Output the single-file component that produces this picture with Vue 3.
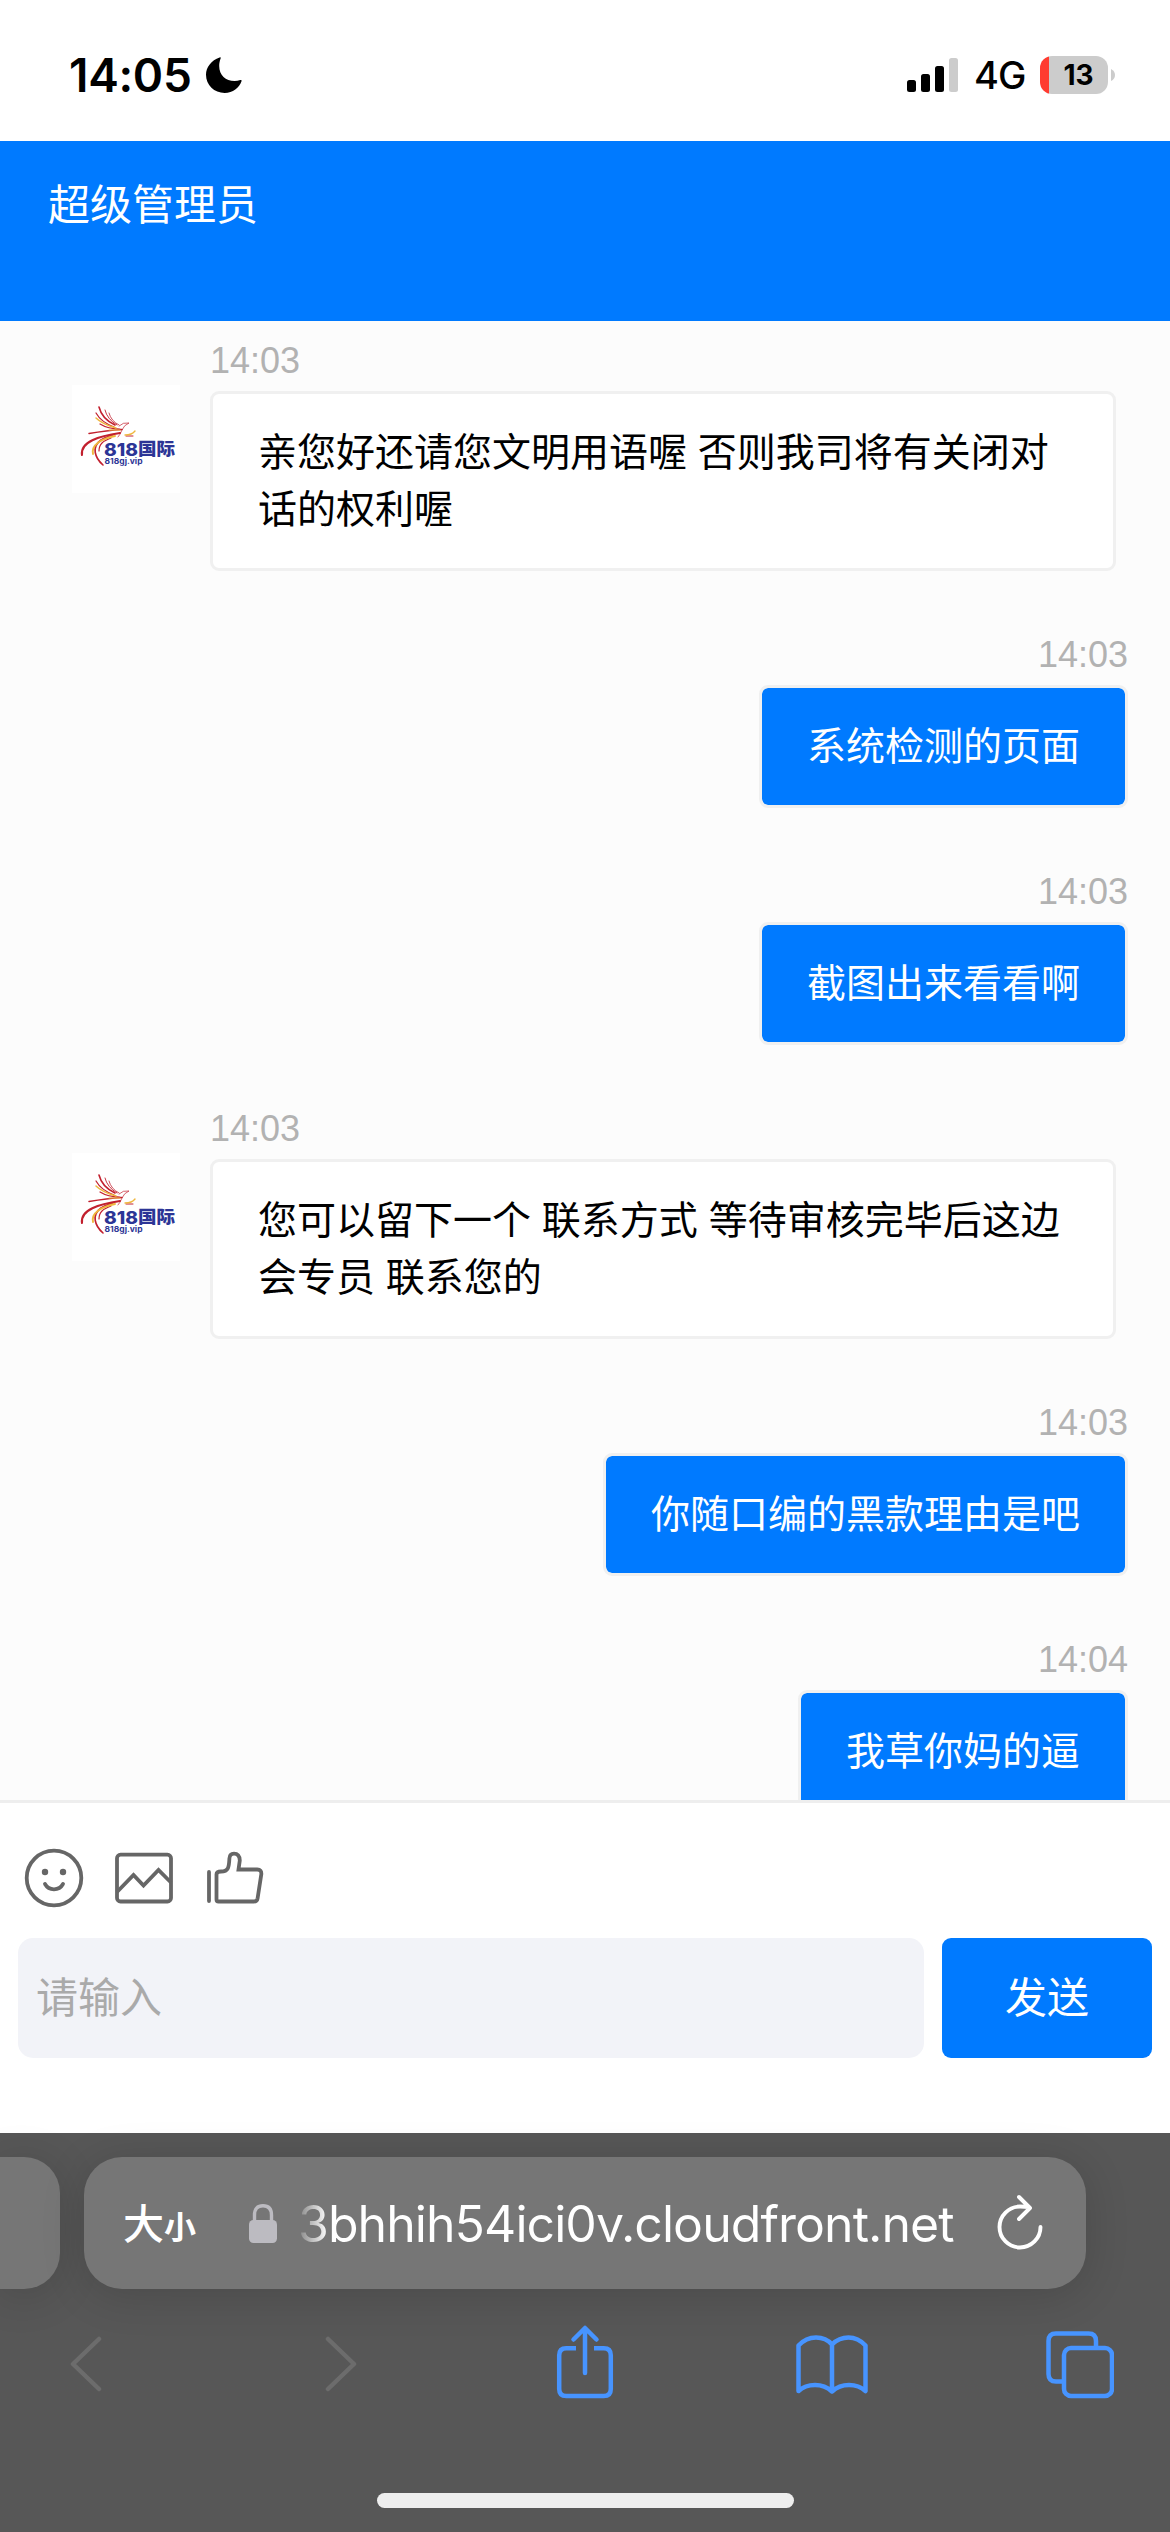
<script setup>
const messages = [
  { mine: false, time: '14:03', text: '亲您好还请您文明用语喔 否则我司将有关闭对话的权利喔' },
  { mine: true, time: '14:03', text: '系统检测的页面' },
  { mine: true, time: '14:03', text: '截图出来看看啊' },
  { mine: false, time: '14:03', text: '您可以留下一个 联系方式 等待审核完毕后这边会专员 联系您的' },
  { mine: true, time: '14:03', text: '你随口编的黑款理由是吧' },
  { mine: true, time: '14:04', text: '我草你妈的逼' },
]
</script>

<template>
  <div class="phone">
    <div class="status">
      <span class="clock">14:05</span>
      <svg class="moon" width="36" height="36" viewBox="0 0 36 36">
        <path d="M13.600.6C14.400-.1 15 .4 14.600 1.400 13.700 3.800 13.200 6.200 13.200 9c0 9 6.500 15 15.400 15 2 0 3.900-.4 5.700-1 1-.3 1.600.2 1.300 1.100C33.300 31 26.800 36 18.700 36 8.300 36 0 28.300 0 17.800 0 10.300 5.300 3.500 13.600.6z" />
      </svg>
      <svg class="signal" width="51" height="34" viewBox="0 0 51 34">
        <rect x="0" y="22" width="9" height="12" rx="2.500" />
        <rect x="14" y="16" width="9" height="18" rx="2.500" />
        <rect x="28" y="8" width="9" height="26" rx="2.500" />
        <rect x="42" y="0" width="9" height="34" rx="2.500" fill="#ccc" />
      </svg>
      <span class="net">4G</span>
      <div class="battery"><span>13</span></div>
      <svg class="nub" width="4" height="12" viewBox="0 0 4 12"><path d="M0 0q4 2 4 6t-4 6z" fill="#ccc" /></svg>
    </div>

    <header class="title">超级管理员</header>

    <main class="chat">
      <div v-for="(m, i) in messages" :key="i" class="item" :class="{ mine: m.mine }">
        <div v-if="!m.mine" class="avatar">
          <svg width="108" height="108" viewBox="0 0 108 108" fill="none" stroke-linecap="round">
            <g stroke="#c2202e">
              <path d="M27 22q3 12 16 18" stroke-width="1.600" />
              <path d="M24 28q5 9 18 14" stroke-width="1.200" />
              <path d="M33 25q2 9 12 15" stroke-width=".9" />
              <path d="M37 28q2 8 10 12" stroke-width=".8" />
              <path d="M28 39q8 5 20 5" stroke-width="1.200" />
              <path d="M47 41q4-4 10-3q-5 2-7 7t-4 7" stroke-width=".7" />
              <path d="M17 48.500q18-3 33-4" stroke-width="1.500" />
              <path d="M10 70C8 57 27 51 48 48" stroke-width="2.100" />
              <path d="M27 66c0-7 4-10 12-13" stroke-width="1.200" />
              <path d="M31 80C23 73 19 62 29 55q5-3 12-5" stroke-width="1.600" />
              <path d="M54 51h7" stroke-width="1" />
            </g>
            <g stroke="#efb73e">
              <path d="M24 33q6 6 20 10" stroke-width="1.500" />
              <path d="M37 45h11" stroke-width="1.200" />
              <path d="M21 69c-2-9 8-15 22-18" stroke-width="1.900" />
              <path d="M53 50q7 0 10-4" stroke-width="1.400" />
            </g>
            <text class="brand" x="32" y="70.500" textLength="34" lengthAdjust="spacingAndGlyphs">818</text>
            <text class="brand cn" x="66" y="70" textLength="37" lengthAdjust="spacingAndGlyphs">国际</text>
            <text class="brand site" x="32.500" y="79" textLength="38" lengthAdjust="spacingAndGlyphs">818gj.vip</text>
          </svg>
        </div>
        <div class="body">
          <div class="time">{{ m.time }}</div>
          <div class="bubble">{{ m.text }}</div>
        </div>
      </div>
    </main>

    <footer class="composer">
      <div class="tools">
        <svg width="60" height="60" viewBox="0 0 60 60">
          <circle cx="30" cy="30" r="27.300" />
          <circle cx="21" cy="24" r="3.200" class="dot" /><circle cx="39" cy="24" r="3.200" class="dot" />
          <path d="M21 36q3 5.300 9 5.300t9-5.300" />
        </svg>
        <svg width="60" height="60" viewBox="0 0 60 60">
          <rect x="3" y="6.700" width="54" height="46.800" rx="3.500" />
          <path d="M3 44l16.500-17 10 10.500 15-15.500L57 34.500" stroke-linecap="butt" />
        </svg>
        <svg width="60" height="60" viewBox="0 0 60 60">
          <path d="M5 24v29M12.500 26v25.500q0 2 2 2H50q3 0 3.600-3.200l3.700-24q.4-4.800-4-4.800H34.500l1.300-9Q35.500 5.700 30 5.700q-4.400 0-4.600 4.800C25 18 25 23.500 17 23.500q-4.500 0-4.500 3" />
        </svg>
      </div>
      <div class="row">
        <div class="field">请输入</div>
        <button class="send">发送</button>
      </div>
    </footer>

    <div class="safari">
      <div class="tabs">
        <div class="tab prev"></div>
        <div class="tab current">
          <span class="aa">大<small>小</small></span>
          <svg class="lock" width="28" height="39" viewBox="0 0 28 39">
            <path d="M5.500 18V11Q5.500 1.800 14 1.800T22.500 11v7" fill="none" stroke="#bcbbc1" stroke-width="3.400" />
            <rect x="0" y="16" width="28" height="23" rx="4.500" fill="#bcbbc1" />
          </svg>
          <span class="url">3bhhih54ici0v.cloudfront.net</span>
          <svg class="reload" width="46" height="56" viewBox="0 0 46 56" fill="none" stroke="#fff" stroke-width="3.900" stroke-linecap="round" stroke-linejoin="round">
            <path d="M43.500 33a20.500 20.500 0 1 1-20.500-20.500q5 0 8.500.5M22 3l11 11-11 11" />
          </svg>
        </div>
      </div>
      <nav class="bar">
        <svg width="32" height="56" viewBox="0 0 32 56" class="dim"><path d="M29 3L3 28l26 25" /></svg>
        <svg width="32" height="56" viewBox="0 0 32 56" class="dim fwd"><path d="M3 3l26 25L3 53" /></svg>
        <svg width="58" height="76" viewBox="0 0 58 76" class="share">
          <path d="M20 25.300H10.200q-7 0-7 7V66q0 7 7 7h37.600q7 0 7-7V32.300q0-7-7-7H38" stroke-linecap="butt" />
          <path d="M29 50V5.500M17.500 16.500L29 5l11.500 11.500" />
        </svg>
        <svg width="72" height="60" viewBox="0 0 72 60" class="book">
          <path d="M36 56.500V9.500Q30 2.500 20 2.500T2.500 10.500V56Q9 50 19 50t17 6.500Q43 50 53 50t16.500 6V10.500Q62 2.500 52.500 2.500T36 9.500" />
        </svg>
        <svg width="68" height="68" viewBox="0 0 68 68" class="pages">
          <rect x="18" y="17" width="48" height="48" rx="7" />
          <path d="M50 16V10q0-7.500-7.500-7.500h-32.500Q2.500 2.500 2.500 10v33q0 7.500 7.500 7.500h7" stroke-linecap="butt" />
        </svg>
      </nav>
      <div class="home"></div>
    </div>
  </div>
</template>

<style>
body { margin: 0; }
</style>

<style scoped>
.phone {
  width: 1170px;
  height: 2532px;
  display: flex;
  flex-direction: column;
  overflow: hidden;
  background: #fff;
  font-family: "Liberation Sans", "Noto Sans CJK SC", sans-serif;
  color: #000;
}
.phone * { box-sizing: border-box; }
svg { display: block; flex: none; }
.status {
  height: 141px;
  flex: none;
  display: flex;
  align-items: center;
  padding: 8px 55px 0 69px;
  font-family: Inter, sans-serif;
}
.clock { width: 137px; font-size: 46px; font-weight: 600; line-height: 56px; letter-spacing: -.3px; white-space: nowrap; }
.signal { margin-left: auto; }
.net { width: 82px; padding-left: 16px; font-size: 38px; font-weight: 450; letter-spacing: -1px; line-height: 44px; }
.battery {
  width: 68px;
  height: 38px;
  border-radius: 12px;
  background: linear-gradient(90deg, #ff3b30 9px, #ccc 9px);
  text-align: center;
  font-size: 28px;
  font-weight: 700;
  line-height: 38px;
  padding-left: 9px;
}
.nub { margin-left: 3px; }
.title {
  height: 180px;
  flex: none;
  padding: 33px 48px 0;
  background: #007aff;
  color: #fff;
  font-size: 42px;
  line-height: 63px;
}
.chat {
  height: 1479px;
  flex: none;
  overflow: hidden;
  background: #fcfcfc;
  padding: 18px 42px 0 72px;
}
.item { display: flex; gap: 30px; margin-bottom: 62px; }
.avatar { width: 108px; height: 108px; margin-top: 46px; background: #fff; flex: none; }
.brand { fill: #2c3596; font-family: Inter, sans-serif; font-weight: 800; font-size: 18px; }
.cn { font-family: "Noto Sans CJK SC", sans-serif; font-weight: 900; font-size: 17px; }
.site { font-size: 8px; font-weight: 700; }
.body { width: 906px; }
.time { height: 43px; margin-bottom: 9px; font-size: 36px; line-height: 43px; color: #b2b2b2; }
.bubble {
  border: 3px solid #f0f0f0;
  border-radius: 9px;
  padding: 30px 45px;
  font-size: 39px;
  line-height: 57px;
  background: #fff;
}
.mine { justify-content: flex-end; }
.mine .body { width: auto; }
.mine .time { text-align: right; }
.mine .bubble { color: #fff; background: #007aff; background-clip: padding-box; }
.composer {
  height: 333px;
  flex: none;
  border-top: 3px solid #eee;
  background: #fff;
  padding: 45px 18px 0;
}
.tools { display: flex; gap: 30px; padding-left: 6px; height: 90px; }
.tools svg { fill: none; stroke: #666; stroke-width: 3.800; stroke-linecap: round; }
.tools .dot { fill: #666; stroke: none; }
.row { display: flex; gap: 18px; height: 120px; }
.field {
  width: 906px;
  border-radius: 15px;
  background: #f2f3f8;
  color: #aaa;
  font-size: 42px;
  line-height: 122px;
  padding-left: 18px;
}
.send {
  width: 210px;
  border: 0;
  padding: 1px 0 0;
  border-radius: 9px;
  background: #007aff;
  color: #fff;
  font-family: inherit;
  font-size: 42px;
  line-height: 119px;
}
.safari { height: 399px; flex: none; background: #575757; padding-top: 24px; display: flex; flex-direction: column; }
.tabs { display: flex; gap: 24px; height: 132px; flex: none; }
.tab { background: #767676; box-shadow: 0 6px 44px rgba(0, 0, 0, .15); }
.prev { width: 60px; border-radius: 0 36px 36px 0; }
.current { width: 1002px; border-radius: 38px; display: flex; align-items: center; padding-left: 39px; color: #fff; }
.aa { width: 126px; font-family: "Noto Sans CJK SC", sans-serif; font-size: 41px; font-weight: 500; line-height: 60px; white-space: nowrap; }
.aa small { font-size: 32px; font-weight: 700; }
.url {
  width: 664px;
  margin-left: 21px;
  padding-top: 2px;
  font-family: Inter, sans-serif;
  font-size: 50px;
  line-height: 60px;
  letter-spacing: -.95px;
  white-space: nowrap;
  color: transparent;
  background: linear-gradient(90deg, #858585, #fff 30px);
  background-clip: text;
}
.reload { margin-left: 35px; margin-top: -3px; }
.bar { display: flex; height: 204px; padding: 34px 56px 0 70px; align-items: flex-start; flex: none; }
.bar svg { fill: none; stroke: #4794ff; stroke-width: 4.500; stroke-linecap: round; stroke-linejoin: round; }
.bar .dim { stroke: #6c6c6c; margin-top: 13px; }
.bar .fwd { margin-left: 223px; }
.share { margin-left: 199px; }
.book { margin: 12px 0 0 182px; }
.pages { margin: 8px 0 0 auto; }
.home { width: 417px; height: 15px; border-radius: 8px; background: #eee; align-self: center; }
</style>
